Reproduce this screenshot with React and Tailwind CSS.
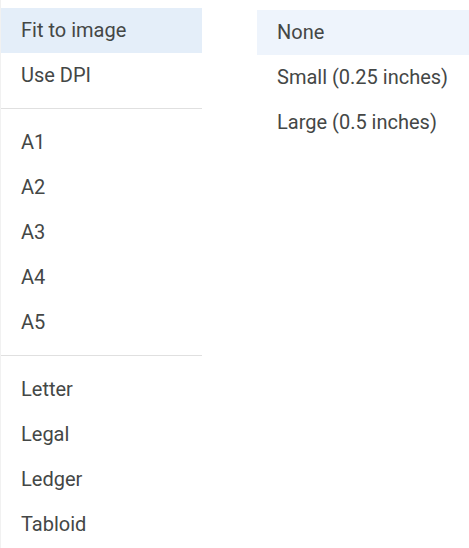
import { useState } from 'react';

const pageSizes = [
  ['Fit to image', 'Use DPI'],
  ['A1', 'A2', 'A3', 'A4', 'A5'],
  ['Letter', 'Legal', 'Ledger', 'Tabloid'],
];

const margins = ['None', 'Small (0.25 inches)', 'Large (0.5 inches)'];

function Item({ label, active, activeClass, onClick }) {
  return (
    <button
      onClick={onClick}
      className={`block w-full h-[45px] pl-[20px] text-left text-[20px] leading-[45px] text-[#444746] ${
        active ? activeClass : 'bg-white'
      }`}
    >
      {label}
    </button>
  );
}

export default function App() {
  const [size, setSize] = useState('Fit to image');
  const [margin, setMargin] = useState('None');

  return (
    <div
      className="flex w-[469px] h-[548px] overflow-hidden bg-white"
      style={{ fontFamily: 'Roboto, "Liberation Sans", sans-serif' }}
    >
      {/* page size menu */}
      <div className="w-[202px] shrink-0 pt-2 border-l border-[#f1f1f1]">
        {pageSizes.map((group, i) => (
          <div key={i}>
            {i > 0 && <div className="mt-[10px] mb-[11px] h-px bg-[#e0e0e0]" />}
            {group.map((label) => (
              <Item
                key={label}
                label={label}
                active={size === label}
                activeClass="bg-[#e4eef9]"
                onClick={() => setSize(label)}
              />
            ))}
          </div>
        ))}
      </div>

      {/* margin menu */}
      <div className="ml-[55px] w-[240px] shrink-0 pt-[10px]">
        {margins.map((label) => (
          <Item
            key={label}
            label={label}
            active={margin === label}
            activeClass="bg-[#eef4fc]"
            onClick={() => setMargin(label)}
          />
        ))}
      </div>
    </div>
  );
}
